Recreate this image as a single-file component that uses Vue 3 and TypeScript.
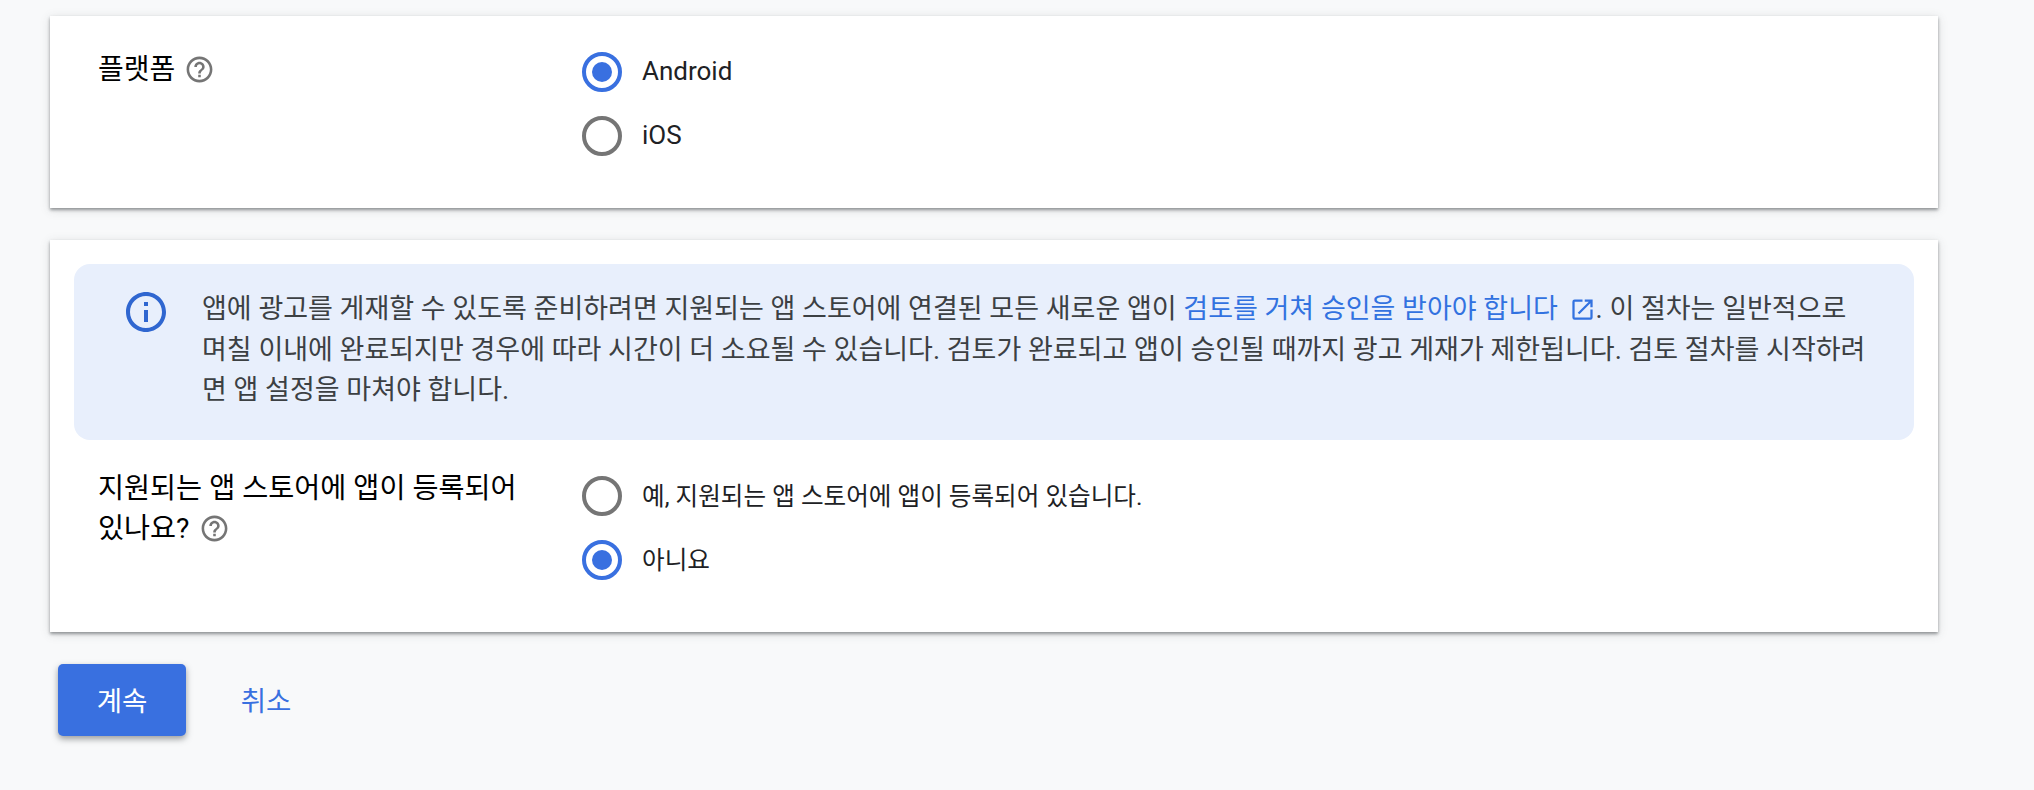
<script setup lang="ts">
interface Option {
  label: string
  checked: boolean
}

const platforms: Option[] = [
  { label: 'Android', checked: true },
  { label: 'iOS', checked: false },
]

const listed: Option[] = [
  { label: '예, 지원되는 앱 스토어에 앱이 등록되어 있습니다.', checked: false },
  { label: '아니요', checked: true },
]
</script>

<template>
  <main class="page">
    <section class="card card-platform">
      <div class="field">
        <div class="label">
          플랫폼
          <svg class="help" viewBox="0 0 24 24" aria-hidden="true">
            <path d="M11 18h2v-2h-2v2zm1-16C6.48 2 2 6.48 2 12s4.48 10 10 10 10-4.48 10-10S17.52 2 12 2zm0 18c-4.41 0-8-3.59-8-8s3.59-8 8-8 8 3.59 8 8-3.59 8-8 8zm0-14c-2.21 0-4 1.79-4 4h2c0-1.1.9-2 2-2s2 .9 2 2c0 2-3 1.75-3 5h2c0-2.25 3-2.5 3-5 0-2.21-1.79-4-4-4z" />
          </svg>
        </div>
        <div class="options">
          <label v-for="opt in platforms" :key="opt.label" class="option">
            <span class="radio" :class="{ checked: opt.checked }"></span>
            <span class="option-text">{{ opt.label }}</span>
          </label>
        </div>
      </div>
    </section>

    <section class="card card-store">
      <div class="notice">
        <svg class="info" viewBox="0 0 24 24" aria-hidden="true">
          <path d="M11 7h2v2h-2V7zm0 4h2v6h-2v-6zm1-9C6.48 2 2 6.48 2 12s4.48 10 10 10 10-4.48 10-10S17.52 2 12 2zm0 18c-4.41 0-8-3.59-8-8s3.59-8 8-8 8 3.59 8 8-3.59 8-8 8z" />
        </svg>
        <p class="notice-text">
          앱에 광고를 게재할 수 있도록 준비하려면 지원되는 앱 스토어에 연결된 모든 새로운 앱이
          <a class="link" href="#">검토를 거쳐 승인을 받아야 합니다
            <svg class="external" viewBox="0 0 24 24" aria-hidden="true">
              <path d="M19 19H5V5h7V3H5a2 2 0 0 0-2 2v14a2 2 0 0 0 2 2h14a2 2 0 0 0 2-2v-7h-2v7zM14 3v2h3.59l-9.83 9.83 1.41 1.41L19 6.41V10h2V3h-7z" />
            </svg></a>. 이 절차는 일반적으로 며칠 이내에 완료되지만 경우에 따라 시간이 더 소요될 수 있습니다. 검토가 완료되고 앱이 승인될 때까지 광고 게재가 제한됩니다. 검토 절차를 시작하려면 앱 설정을 마쳐야 합니다.
        </p>
      </div>
      <div class="field">
        <div class="label label-wrap">
          지원되는 앱 스토어에 앱이 등록되어 있나요?
          <svg class="help" viewBox="0 0 24 24" aria-hidden="true">
            <path d="M11 18h2v-2h-2v2zm1-16C6.48 2 2 6.48 2 12s4.48 10 10 10 10-4.48 10-10S17.52 2 12 2zm0 18c-4.41 0-8-3.59-8-8s3.59-8 8-8 8 3.59 8 8-3.59 8-8 8zm0-14c-2.21 0-4 1.79-4 4h2c0-1.1.9-2 2-2s2 .9 2 2c0 2-3 1.75-3 5h2c0-2.25 3-2.5 3-5 0-2.21-1.79-4-4-4z" />
          </svg>
        </div>
        <div class="options options-small">
          <label v-for="opt in listed" :key="opt.label" class="option">
            <span class="radio" :class="{ checked: opt.checked }"></span>
            <span class="option-text">{{ opt.label }}</span>
          </label>
        </div>
      </div>
    </section>

    <div class="actions">
      <button class="btn-primary" type="button">계속</button>
      <button class="btn-text" type="button">취소</button>
    </div>
  </main>
</template>

<style>
html,
body {
  margin: 0;
  background: #f8f9fa;
}
</style>

<style scoped>
.page {
  box-sizing: border-box;
  width: 2034px;
  height: 790px;
  padding: 16px 96px 0 50px;
  overflow: hidden;
  background: #f8f9fa;
  font-family: Roboto, "Noto Sans CJK KR", sans-serif;
  color: #202124;
}

.card {
  background: #fff;
  box-shadow: 0 2px 3px rgba(60, 64, 67, 0.5), 0 2px 10px rgba(60, 64, 67, 0.15);
}

.card-platform {
  height: 192px;
  padding-top: 34px;
  box-sizing: border-box;
  margin-bottom: 32px;
}

.card-store {
  height: 392px;
  box-sizing: border-box;
  padding: 24px 24px 0;
}

.field {
  display: grid;
  grid-template-columns: 484px 1fr;
  padding-left: 48px;
}

.card-store .field {
  padding-left: 24px;
  padding-top: 29px;
}

.label {
  font-size: 28px;
  line-height: 40px;
  color: #000;
}

.label-wrap {
  width: 440px;
  font-size: 28.3px;
}

.help {
  width: 31px;
  height: 31px;
  fill: #757575;
  vertical-align: -6px;
  margin-left: 2px;
}

.options {
  display: flex;
  flex-direction: column;
  gap: 24px;
  padding-top: 2px;
}

.card-store .options {
  padding-top: 7px;
}

.option {
  display: flex;
  align-items: center;
  height: 40px;
  gap: 20px;
}

.option-text {
  font-size: 26px;
  color: #202124;
  padding-bottom: 2px;
}

.options-small .option-text {
  font-size: 24.6px;
  padding-bottom: 5px;
}

.radio {
  box-sizing: border-box;
  width: 40px;
  height: 40px;
  border: 4.5px solid #757575;
  border-radius: 50%;
  display: flex;
  align-items: center;
  justify-content: center;
}

.radio.checked {
  border-color: #3970e0;
}

.radio.checked::after {
  content: "";
  width: 20px;
  height: 20px;
  border-radius: 50%;
  background: #3970e0;
}

.notice {
  display: flex;
  height: 176px;
  box-sizing: border-box;
  padding: 24px 43px 0 48px;
  gap: 32px;
  background: #e8effc;
  border-radius: 16px;
}

.info {
  flex: none;
  width: 48px;
  height: 48px;
  fill: #2f66d0;
}

.notice-text {
  margin: 1px 0 0;
  font-size: 27px;
  line-height: 40.5px;
  color: #3c4043;
}

.link {
  color: #3272e0;
  text-decoration: none;
}

.external {
  width: 27px;
  height: 27px;
  fill: #3272e0;
  vertical-align: -5px;
  margin-left: 4px;
}

.actions {
  display: flex;
  align-items: center;
  gap: 32px;
  margin-top: 32px;
  padding-left: 8px;
}

.btn-primary {
  width: 128px;
  height: 72px;
  padding: 0 0 2px;
  border: none;
  border-radius: 5px;
  background: #3970e0;
  color: #fff;
  font: inherit;
  font-size: 27.5px;
  box-shadow: 0 3px 6px rgba(60, 64, 67, 0.5);
}

.btn-text {
  width: 96px;
  height: 72px;
  padding: 0 0 2px;
  border: none;
  background: none;
  color: #3970e0;
  font: inherit;
  font-size: 27.5px;
}
</style>
